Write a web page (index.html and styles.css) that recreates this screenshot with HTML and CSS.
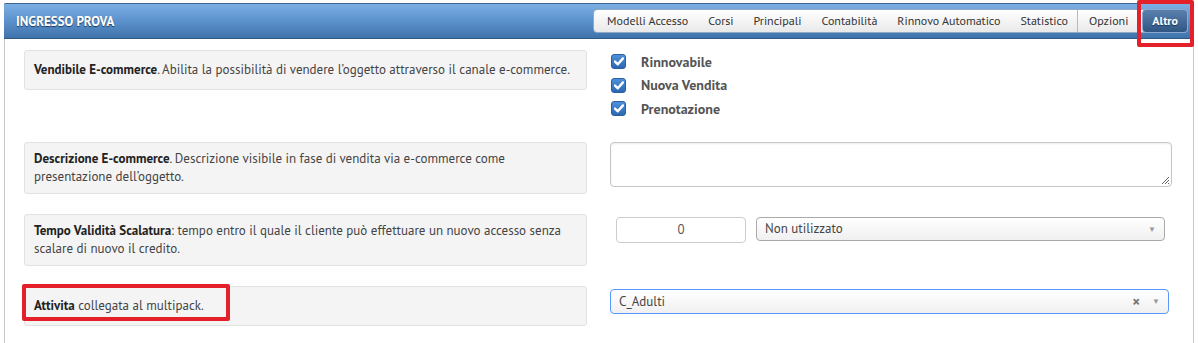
FILE: index.html
```html
<!DOCTYPE html>
<html lang="it">
<head>
    <meta charset="UTF-8">
    <title>Ingresso Prova</title>
    <link rel="stylesheet" href="styles.css">
</head>
<body>
    <div class="panel">
        <div class="panel-heading">
            <span class="panel-title">INGRESSO PROVA</span>
            <div class="tabs">
                <span class="tab">Modelli Accesso</span>
                <span class="tab">Corsi</span>
                <span class="tab">Principali</span>
                <span class="tab">Contabilità</span>
                <span class="tab">Rinnovo Automatico</span>
                <span class="tab sep">Statistico</span>
                <span class="tab">Opzioni</span>
                <span class="tab active">Altro</span>
            </div>
        </div>

        <div class="panel-body">
            <div class="row first">
                <div class="help"><span><b>Vendibile E-commerce</b>. Abilita la possibilità di vendere l’oggetto attraverso il canale e-commerce.</span></div>
                <div class="checks">
                    <label class="check"><span class="box"><svg width="10" height="9" viewBox="0 0 10 9"><path d="M1 4.6 L3.8 7.3 L9 1.4" fill="none" stroke="#fff" stroke-width="2.4" stroke-linecap="round" stroke-linejoin="round"/></svg></span>Rinnovabile</label>
                    <label class="check"><span class="box"><svg width="10" height="9" viewBox="0 0 10 9"><path d="M1 4.6 L3.8 7.3 L9 1.4" fill="none" stroke="#fff" stroke-width="2.4" stroke-linecap="round" stroke-linejoin="round"/></svg></span>Nuova Vendita</label>
                    <label class="check"><span class="box"><svg width="10" height="9" viewBox="0 0 10 9"><path d="M1 4.6 L3.8 7.3 L9 1.4" fill="none" stroke="#fff" stroke-width="2.4" stroke-linecap="round" stroke-linejoin="round"/></svg></span>Prenotazione</label>
                </div>
            </div>

            <div class="row">
                <div class="help"><span><b>Descrizione E-commerce</b>. Descrizione visibile in fase di vendita via e-commerce come<br>presentazione dell’oggetto.</span></div>
                <div class="textarea"><svg class="grip" width="9" height="9" viewBox="0 0 9 9"><path d="M8 1 L1 8 M8 4 L4 8 M8 7 L7 8" stroke="#666" stroke-width="1"/></svg></div>
            </div>

            <div class="row">
                <div class="help"><span><b>Tempo Validità Scalatura</b>: tempo entro il quale il cliente può effettuare un nuovo accesso senza<br>scalare di nuovo il credito.</span></div>
                <div class="inline">
                    <div class="num">0</div>
                    <div class="select wide"><span>Non utilizzato</span><span class="arrow">▼</span></div>
                </div>
            </div>

            <div class="row">
                <div class="help"><span><b>Attivita</b> collegata al multipack.</span></div>
                <div class="single">
                    <div class="select focus"><span>C_Adulti</span><span class="clear">×</span><span class="arrow">▼</span></div>
                </div>
            </div>
        </div>
    </div>

    <div class="mark mark-tab"></div>
    <div class="mark mark-label"></div>
</body>
</html>
```

FILE: styles.css
```css
body {
    margin: 0;
    font-family: "PT Sans", "Liberation Sans Narrow", Roboto, sans-serif;
    font-size: 13px;
    color: #444;
    background: #fff;
}
.panel {
    margin: 3px 4px 0 4px;
    border-left: 1px solid #c8c8c8;
    border-right: 1px solid #c8c8c8;
    height: 340px;
}
.panel-heading {
    display: flex;
    align-items: center;
    justify-content: space-between;
    height: 34px;
    margin: 0 -1px;
    padding: 0 6px 0 12px;
    background: linear-gradient(#7cb0e4, #5b91cc 50%, #3f73ab);
    border-top: 1px solid #3e6594;
    border-bottom: 1px solid #2f5884;
    border-radius: 2px 2px 0 0;
}
.panel-title {
    color: #fff;
    font-weight: bold;
    font-size: 13px;
    text-shadow: 0 1px 1px #1e3a5f;
}
.tabs {
    display: flex;
    align-items: center;
    height: 22px;
    padding-left: 3px;
    background: linear-gradient(#ffffff, #e9e9e9);
    border: 1px solid #8fa9c7;
    border-radius: 4px;
}
.tab {
    padding: 0 9px;
    margin: 0 1px;
    font-size: 12px;
    color: #333;
    line-height: 22px;
}
.tab.sep {
    border-right: 1px solid #a7bcd6;
}
.tab.active {
    margin: 0 -1px 0 4px;
    padding: 0 9px;
    height: 22px;
    color: #fff;
    font-weight: bold;
    background: linear-gradient(#5b80ad, #2f5683);
    border: 1px solid #8ba8cc;
    border-radius: 4px;
    text-shadow: 0 1px 1px #1b3355;
}
.panel-body {
    padding: 11px 21px 0 19px;
}
.row {
    display: grid;
    grid-template-columns: 563px 1fr;
    column-gap: 23px;
    margin-bottom: 20px;
    align-items: start;
}
.row.first {
    margin-bottom: 21px;
}
.help {
    display: flex;
    align-items: center;
    min-height: 40px;
    box-sizing: border-box;
    padding: 7px 9px;
    background: #f4f4f4;
    border: 1px solid #e2e2e2;
    border-radius: 3px;
    line-height: 18px;
    color: #444;
}
.help b {
    color: #222;
}
.checks {
    display: flex;
    flex-direction: column;
}
.check {
    display: flex;
    align-items: center;
    height: 23.5px;
    font-size: 14px;
    font-weight: bold;
    color: #555;
    padding-left: 1px;
}
.box {
    display: flex;
    align-items: center;
    justify-content: center;
    width: 15px;
    height: 15px;
    margin-right: 15px;
    background: linear-gradient(#4f90dc, #2c69b2);
    border: 1px solid #2a5e9e;
    border-radius: 3px;
    box-sizing: border-box;
}
.textarea {
    position: relative;
    height: 43px;
    background: #fff;
    border: 1px solid #c6c6c6;
    border-radius: 4px;
    box-shadow: inset 0 1px 2px rgba(0,0,0,0.08);
}
.grip {
    position: absolute;
    right: 1px;
    bottom: 1px;
}
.inline {
    display: flex;
    gap: 10px;
    padding: 3px 7px 0 6px;
}
.num {
    width: 130px;
    height: 26px;
    box-sizing: border-box;
    border: 1px solid #ccc;
    border-radius: 4px;
    text-align: center;
    line-height: 24px;
    color: #555;
}
.select {
    display: flex;
    align-items: center;
    height: 24px;
    box-sizing: border-box;
    padding: 0 8px;
    background: linear-gradient(#ffffff, #f0f0f0);
    border: 1px solid #aaa;
    border-radius: 4px;
    color: #444;
}
.select span:first-child {
    flex: 1;
}
.wide {
    flex: 1;
}
.arrow {
    font-size: 8px;
    color: #999;
    margin-left: 12px;
}
.clear {
    font-size: 15px;
    font-weight: bold;
    color: #777;
}
.single {
    padding: 3px 3px 0 0;
}
.select.focus {
    height: 25px;
    border-color: #5897fb;
}
.mark {
    position: absolute;
    border: 4px solid #e4202b;
    border-radius: 2px;
    box-sizing: border-box;
}
.mark-tab {
    left: 1137px;
    top: 0;
    width: 57px;
    height: 47px;
}
.mark-label {
    left: 22px;
    top: 284px;
    width: 208px;
    height: 37px;
}
```
